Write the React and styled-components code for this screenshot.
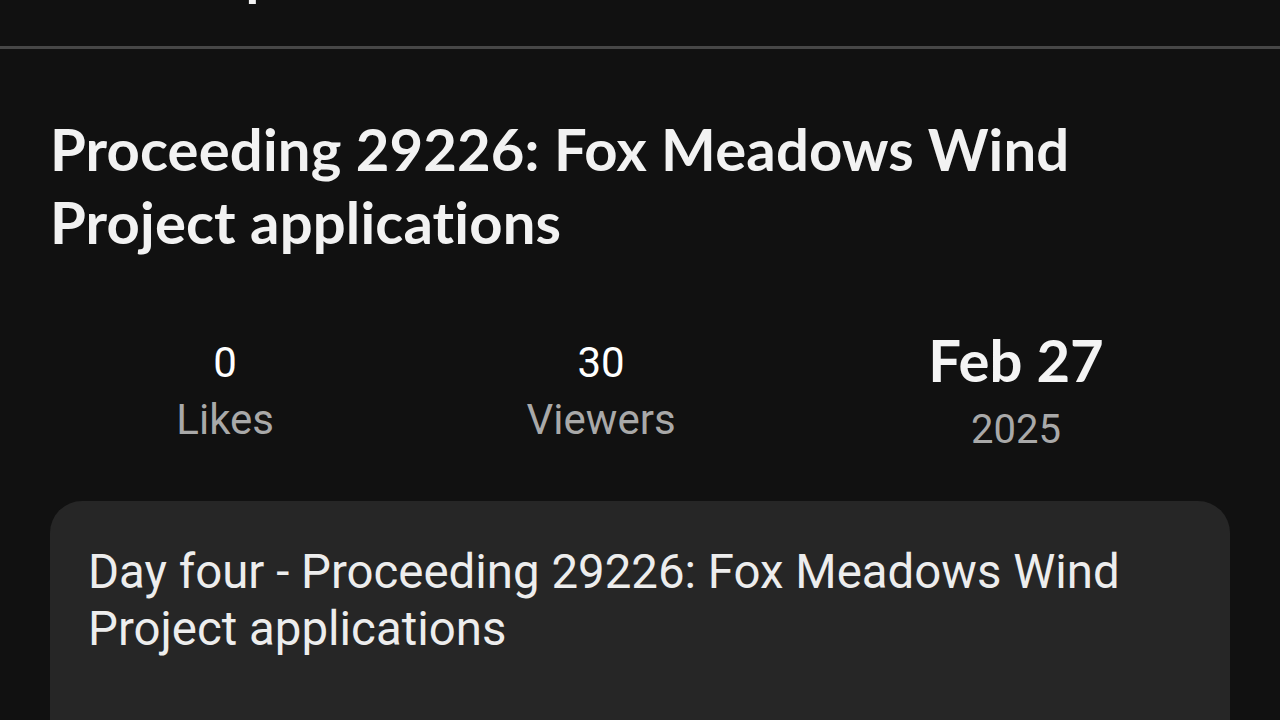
import styled, { createGlobalStyle } from 'styled-components';
import { ArrowLeft } from 'lucide-react';

const GlobalStyle = createGlobalStyle`
  html, body {
    margin: 0;
    padding: 0;
    background: #111111;
  }
  body {
    font-family: Roboto, "Noto Sans", sans-serif;
    color: #f2f2f2;
    overflow: hidden;
  }
`;

const Page = styled.div`
  min-height: 720px;
  background: #111111;
`;

// top bar scrolled mostly out of view: only the tail of the title shows
const Header = styled.header`
  display: flex;
  align-items: flex-start;
  gap: 28px;
  height: 46px;
  padding: 0 50px;
  border-bottom: 3px solid #474747;
  overflow: hidden;
`;

const BackButton = styled.button`
  display: flex;
  align-items: center;
  justify-content: center;
  width: 48px;
  height: 36px;
  margin-top: -46px;
  padding: 0;
  border: none;
  background: none;
  color: #f2f2f2;
`;

const HeaderTitle = styled.h1`
  margin: -54px 0 0;
  font-family: Lato, "Noto Sans", sans-serif;
  font-weight: 700;
  font-size: 56px;
  line-height: 1;
  color: #f2f2f2;
`;

const Content = styled.main`
  padding: 63px 50px 0;
`;

const Title = styled.h2`
  margin: 0;
  font-family: Lato, "Noto Sans", sans-serif;
  font-weight: 700;
  font-size: 58px;
  line-height: 73px;
  letter-spacing: 0.15px;
  color: #f2f2f2;
`;

const Stats = styled.div`
  display: flex;
  justify-content: space-around;
  align-items: center;
  margin-top: 67px;
`;

const Stat = styled.div`
  display: flex;
  flex-direction: column;
  align-items: center;
  gap: ${(p) => p.$gap || 0}px;
`;

const Value = styled.span`
  font-family: Roboto, sans-serif;
  font-size: 42px;
  line-height: 57px;
  color: #ffffff;
`;

const DateValue = styled.span`
  font-family: Lato, "Noto Sans", sans-serif;
  font-weight: 700;
  font-size: 58px;
  line-height: 1.2;
  color: #f4f4f4;
`;

const Label = styled.span`
  font-family: Roboto, sans-serif;
  font-size: ${(p) => p.$size || 42}px;
  line-height: 57px;
  color: #a9a9a9;
`;

const Card = styled.section`
  margin-top: 43px;
  min-height: 320px;
  padding: 43px 38px;
  border-radius: 32px;
  background: #262626;
`;

const Description = styled.p`
  margin: 0;
  font-family: Roboto, sans-serif;
  font-size: 47.4px;
  line-height: 57px;
  color: #ededed;
`;

export default function App() {
  return (
    <Page>
      <GlobalStyle />
      <Header>
        <BackButton aria-label="Back">
          <ArrowLeft size={32} />
        </BackButton>
        <HeaderTitle>Recap</HeaderTitle>
      </Header>

      <Content>
        <Title>Proceeding 29226: Fox Meadows Wind Project applications</Title>

        <Stats>
          <Stat>
            <Value>0</Value>
            <Label>Likes</Label>
          </Stat>
          <Stat>
            <Value>30</Value>
            <Label>Viewers</Label>
          </Stat>
          <Stat $gap={6}>
            <DateValue>Feb 27</DateValue>
            <Label $size={40}>2025</Label>
          </Stat>
        </Stats>

        <Card>
          <Description>
            Day four - Proceeding 29226: Fox Meadows Wind Project applications
          </Description>
        </Card>
      </Content>
    </Page>
  );
}
